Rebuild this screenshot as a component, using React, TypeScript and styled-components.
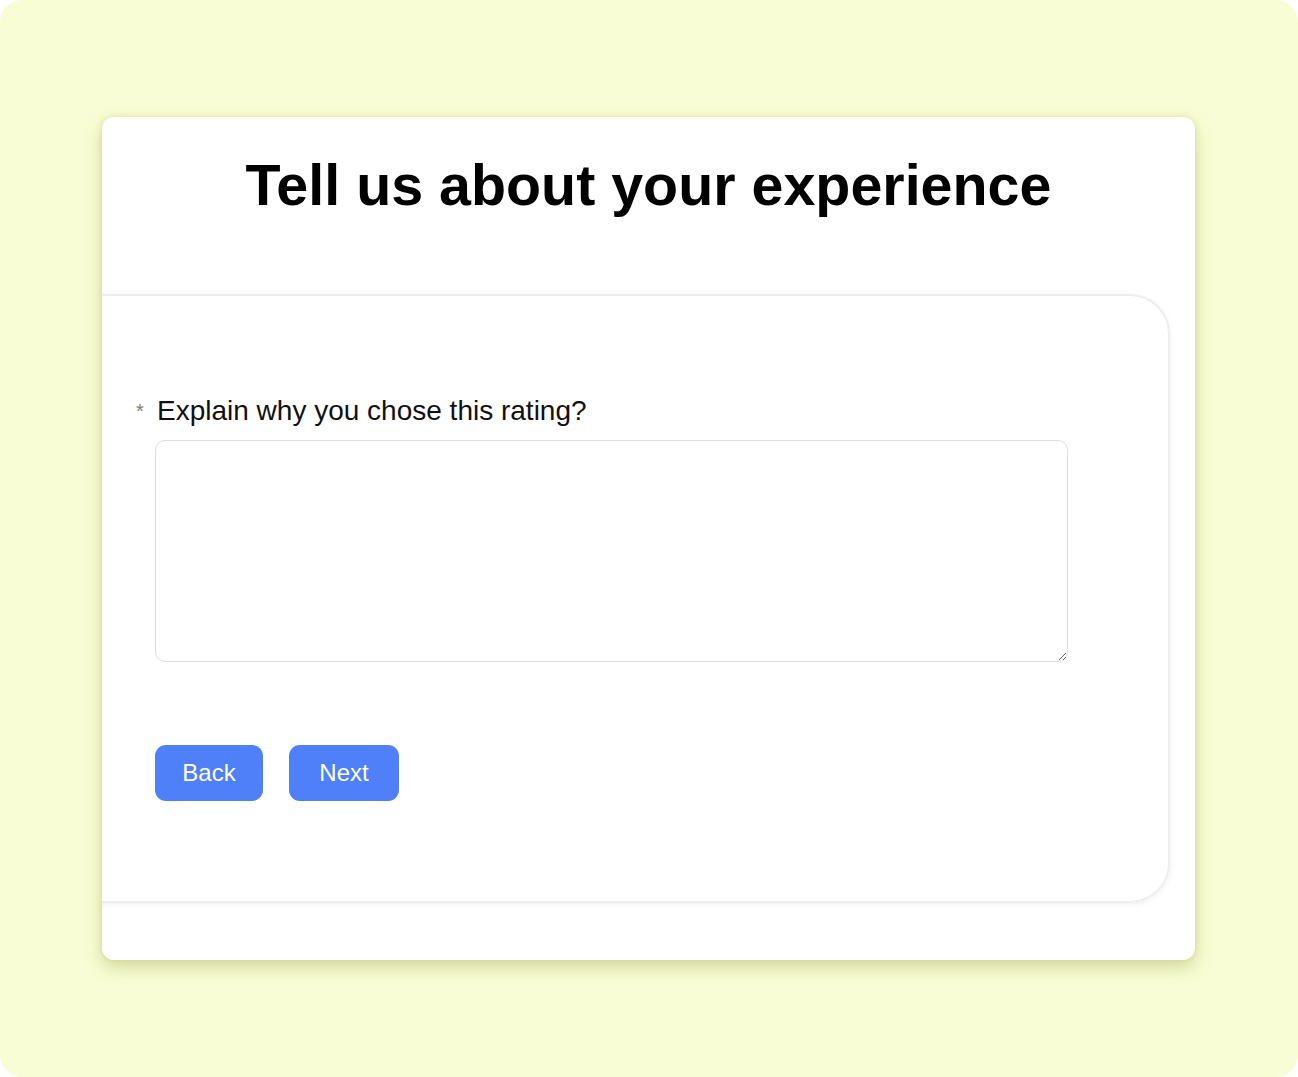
import React from "react";
import styled, { createGlobalStyle } from "styled-components";

const GlobalStyle = createGlobalStyle`
  html, body {
    margin: 0;
    padding: 0;
    background: #ffffff;
  }
  * { box-sizing: border-box; }
`;

const Page = styled.div`
  width: 1298px;
  height: 1077px;
  background: #f9fdd5;
  border-radius: 22px;
  padding: 117px 103px 117px 102px;
  font-family: "Liberation Sans", Arial, Helvetica, sans-serif;
`;

const Card = styled.div`
  height: 843px;
  background: #ffffff;
  border-radius: 12px;
  overflow: hidden;
  box-shadow: 0 8px 18px rgba(170, 180, 90, 0.45), 0 0 6px rgba(190, 200, 120, 0.35);
  padding-top: 40px;
  display: flex;
  flex-direction: column;
`;

const Title = styled.h1`
  margin: 0;
  font-size: 57.4px;
  line-height: 1;
  font-weight: 700;
  color: #000;
  text-align: center;
`;

const Panel = styled.div`
  margin: 80px 25px 0 -40px;
  height: 609px;
  border: 2px solid #eeeeee;
  border-radius: 40px;
  box-shadow: 0 2px 6px rgba(0, 0, 0, 0.06);
  padding: 101px 0 0 91px;
  display: flex;
  flex-direction: column;
`;

const Label = styled.label`
  position: relative;
  display: block;
  margin-left: 2px;
  font-size: 28px;
  line-height: 1;
  color: #111;
`;

const Required = styled.span`
  position: absolute;
  left: -21px;
  top: 4px;
  font-size: 20px;
  color: #80806c;
`;

const TextArea = styled.textarea`
  margin-top: 15px;
  width: 913px;
  height: 222px;
  border: 1.5px solid #dedede;
  border-radius: 10px;
  background: #fff;
  font-family: inherit;
  font-size: 20px;
  padding: 10px;
  outline: none;
`;

const Actions = styled.div`
  margin-top: 83px;
  display: flex;
  gap: 26px;
`;

const Button = styled.button<{ $w: number }>`
  width: ${(p) => p.$w}px;
  height: 56px;
  border: none;
  border-radius: 11px;
  background: #4f80f9;
  color: #fff;
  font-family: inherit;
  font-size: 24px;
  cursor: pointer;
`;

export default function App() {
  return (
    <>
      <GlobalStyle />
      <Page>
        <Card>
          <Title>Tell us about your experience</Title>
          <Panel>
            <Label>
              <Required>*</Required>
              Explain why you chose this rating?
            </Label>
            <TextArea />
            <Actions>
              <Button $w={108}>Back</Button>
              <Button $w={110}>Next</Button>
            </Actions>
          </Panel>
        </Card>
      </Page>
    </>
  );
}
